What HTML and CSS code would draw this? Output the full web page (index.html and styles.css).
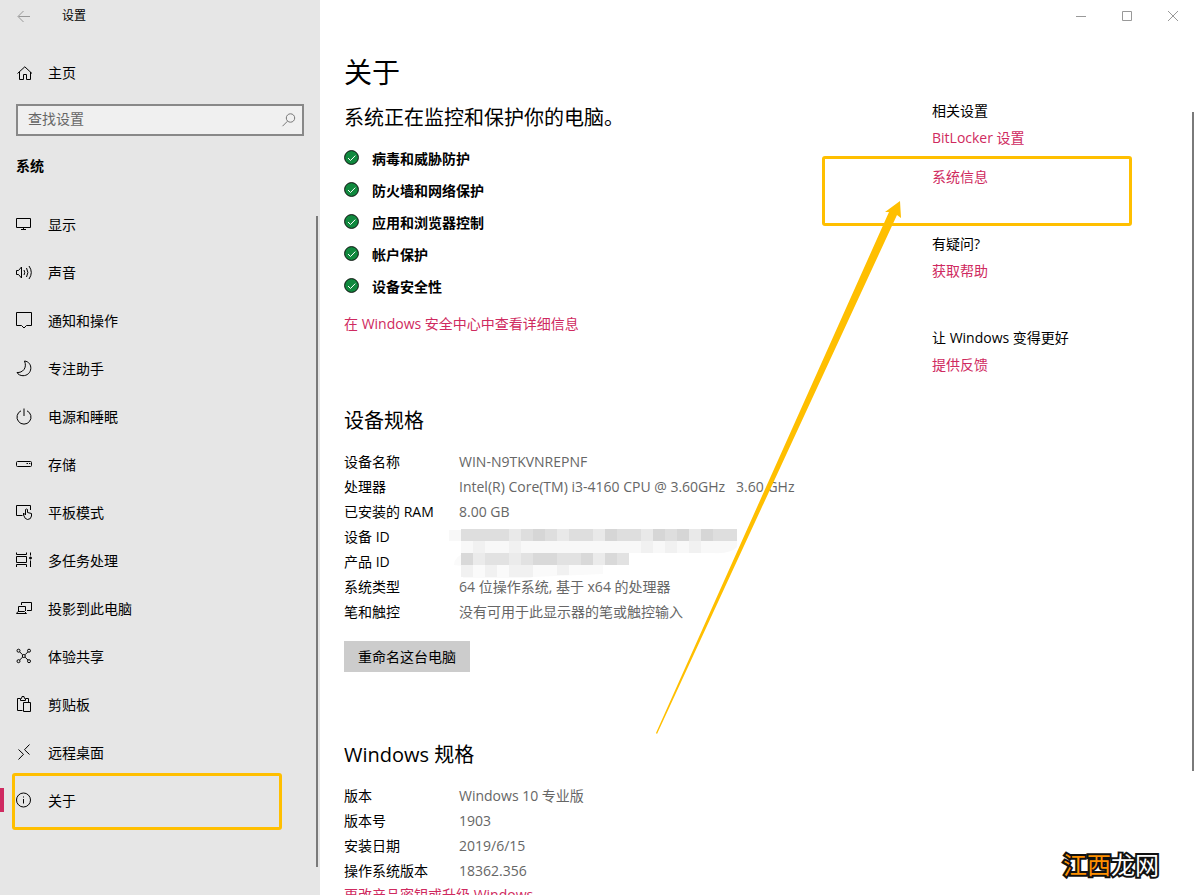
FILE: index.html
```html
<!DOCTYPE html>
<html lang="zh-CN">
<head>
<meta charset="utf-8">
<title>设置</title>
<link rel="stylesheet" href="styles.css">
</head>
<body>
<div class="window">
  <aside class="sidebar">
    <header class="app-bar">
      <button class="back" type="button" aria-label="返回">
        <svg class="icon" viewBox="0 0 17 17"><path d="M2.5 8.5H14M7.5 3L2 8.5L7.5 14"/></svg>
      </button>
      <span class="app-title">设置</span>
    </header>
    <a class="nav-link home" href="#home">
      <svg class="icon" viewBox="0 0 17 17"><path d="M1.5 9.5L8.8 2.8L16 9.5M3.5 8V15.5H7.5V10.5H10.5V15.5H14.5V8"/></svg>
      <span>主页</span>
    </a>
    <label class="search">
      <input class="search-input" type="text" placeholder="查找设置" aria-label="查找设置">
      <svg class="icon search-icon" viewBox="0 0 17 17"><circle cx="10.5" cy="6" r="4.2"/><path d="M7.5 9.2L2.5 14.2"/></svg>
    </label>
    <h2 class="group-title">系统</h2>
    <nav class="nav">
      <a class="nav-link" href="#display"><svg class="icon" viewBox="0 0 17 17"><path d="M.5 2.5H14.5V11.5H.5ZM7.5 11.5V14M5 13.5H10"/></svg><span>显示</span></a>
      <a class="nav-link" href="#sound"><svg class="icon" viewBox="0 0 17 17"><path d="M.5 6.5H2.5L5.5 3V14L2.5 10.5H.5ZM8 6Q9.5 8.5 8 11M10.5 4Q13.300 8.500 10.500 13M13 2Q17.600 8.500 13 15"/></svg><span>声音</span></a>
      <a class="nav-link" href="#notifications"><svg class="icon" viewBox="0 0 17 17"><path d="M.5 .5H15.500V13.500H10.500L8 16L5.500 13.500H.5Z"/></svg><span>通知和操作</span></a>
      <a class="nav-link" href="#focus"><svg class="icon" viewBox="0 0 17 17"><path d="M8.500 1C13 1.500 15 5 14.800 8.500C14.500 13 11 15.700 7 15.700C4.500 15.700 2 14.500 1 12.500C6.500 13 11.500 8 8.500 1Z"/></svg><span>专注助手</span></a>
      <a class="nav-link" href="#power"><svg class="icon" viewBox="0 0 17 17"><path d="M5 2.800A7 7 0 1 0 11 2.800M8 .5V8"/></svg><span>电源和睡眠</span></a>
      <a class="nav-link" href="#storage"><svg class="icon" viewBox="0 0 17 17"><rect x=".5" y="5.500" width="15" height="5" rx="1"/><path d="M10.500 7.500H12M13 7.500H14.300"/></svg><span>存储</span></a>
      <a class="nav-link" href="#tablet"><svg class="icon" viewBox="0 0 17 17"><path d="M6.500 11.500H.5V1.500H14.500V6M7.500 11V9L9.500 11V5.500Q10.500 4.500 11.500 5.500V8.500L15.500 9.500V12Q15 15.500 11.500 15.500Q9 15.500 7.500 11"/></svg><span>平板模式</span></a>
      <a class="nav-link" href="#multitask"><svg class="icon" viewBox="0 0 17 17"><path d="M.5 .5V2.500H10.500V.5M.5 4.500H10.500V10.500H.5ZM.5 15V12.500H10.500V15M14.500 .5V3.500M14.500 8.500V15"/><circle class="solid" cx="14.500" cy="6" r="1"/></svg><span>多任务处理</span></a>
      <a class="nav-link" href="#project"><svg class="icon" viewBox="0 0 17 17"><path d="M5.500 5V2.500H15.500V10.500H11M2.500 11V6.500H9.500V11M.5 13.500L2 11.500H8.500L10.500 13.500Z"/></svg><span>投影到此电脑</span></a>
      <a class="nav-link" href="#share"><svg class="icon" viewBox="0 0 17 17"><circle cx="2.500" cy="2.700" r="1.500"/><circle cx="13" cy="2.700" r="1.500"/><circle cx="2.500" cy="13.200" r="1.500"/><circle cx="13" cy="13.200" r="1.500"/><circle cx="7.800" cy="8" r="1.500"/><path d="M3.700 3.900L6.600 6.800M11.900 3.900L9 6.800M3.700 12L6.600 9.100M11.900 12L9 9.100"/></svg><span>体验共享</span></a>
      <a class="nav-link" href="#clipboard"><svg class="icon" viewBox="0 0 17 17"><path d="M6.500 14.500H1.500V2.500H4M10 2.500H12.500V6M4.500 4.500V2.500H5.500L6 .5H8L8.500 2.500H9.500V4.500ZM7.500 6.500H14.500V15.500H7.500Z"/></svg><span>剪贴板</span></a>
      <a class="nav-link" href="#remote"><svg class="icon" viewBox="0 0 17 17"><path d="M2.500 5.500L7.500 10.300L2.500 15.500M13.500 .5L8.500 5.700L13.500 10.500"/></svg><span>远程桌面</span></a>
      <a class="nav-link current" href="#about" aria-current="page"><svg class="icon" viewBox="0 0 17 17"><circle cx="7.500" cy="8" r="7"/><path d="M7.500 7V11.500M7.500 4.500V5.500"/></svg><span>关于</span></a>
    </nav>
    <span class="scroll-thumb side-thumb"></span>
  </aside>

  <main class="content">
    <div class="caption">
      <button class="caption-btn" type="button" aria-label="最小化"><svg class="caption-icon" viewBox="0 0 10 10"><path d="M0 5.500H10"/></svg></button>
      <button class="caption-btn" type="button" aria-label="最大化"><svg class="caption-icon" viewBox="0 0 10 10"><path d="M.5 .5H9.500V9.500H.5Z"/></svg></button>
      <button class="caption-btn" type="button" aria-label="关闭"><svg class="caption-icon" viewBox="0 0 10 10"><path d="M0 0L10 10M10 0L0 10"/></svg></button>
    </div>
    <div class="columns">
      <div class="primary">
        <h1 class="page-title">关于</h1>
        <p class="status">系统正在监控和保护你的电脑。</p>
        <ul class="checks">
          <li class="check"><svg class="tick" viewBox="0 0 16 16"><circle cx="7.500" cy="7.500" r="6.900"/><path d="M4 8L6.500 10.500L11.300 5.600"/></svg>病毒和威胁防护</li>
          <li class="check"><svg class="tick" viewBox="0 0 16 16"><circle cx="7.500" cy="7.500" r="6.900"/><path d="M4 8L6.500 10.500L11.300 5.600"/></svg>防火墙和网络保护</li>
          <li class="check"><svg class="tick" viewBox="0 0 16 16"><circle cx="7.500" cy="7.500" r="6.900"/><path d="M4 8L6.500 10.500L11.300 5.600"/></svg>应用和浏览器控制</li>
          <li class="check"><svg class="tick" viewBox="0 0 16 16"><circle cx="7.500" cy="7.500" r="6.900"/><path d="M4 8L6.500 10.500L11.300 5.600"/></svg>帐户保护</li>
          <li class="check"><svg class="tick" viewBox="0 0 16 16"><circle cx="7.500" cy="7.500" r="6.900"/><path d="M4 8L6.500 10.500L11.300 5.600"/></svg>设备安全性</li>
        </ul>
        <a class="link security" href="#security">在 Windows 安全中心中查看详细信息</a>

        <section class="specs">
          <h2 class="section-title">设备规格</h2>
          <table class="spec-table">
            <tr><th scope="row">设备名称</th><td>WIN-N9TKVNREPNF</td></tr>
            <tr><th scope="row">处理器</th><td>Intel(R) Core(TM) i3-4160 CPU @ 3.60GHz &nbsp; 3.60 GHz</td></tr>
            <tr><th scope="row">已安装的 RAM</th><td>8.00 GB</td></tr>
            <tr><th scope="row">设备 ID</th><td class="masked">
              <svg class="mosaic" viewBox="0 0 294 50">
                <path fill="#f8f8f8" d="M0 1H12V12H0ZM12 12H288V18Q282 25 264 24H12Z"/>
                <path fill="#fafafa" d="M5 36Q6 26 16 25H154V45L84 48Q80 50 74 49H14V37Z"/>
                <path fill="#dedede" d="M12 0H288V12H12Z"/>
                <path fill="#e9e9e9" d="M60 0H72V12H60ZM108 0H120V12H108ZM144 0H156V12H144ZM192 0H204V12H192ZM240 0H252V12H240Z"/>
                <path fill="#d6d6d6" d="M84 0H96V12H84ZM156 0H168V12H156ZM204 0H216V12H204ZM228 0H240V12H228ZM252 0H264V12H252Z"/>
                <path fill="#f1f1f1" d="M24 12H36V24H24ZM60 12H72V24H60ZM192 12H204V24H192ZM216 12H228V24H216ZM240 12H252V24H240Z"/>
                <path fill="#e2e2e2" d="M12 24H180V36H12Z"/>
                <path fill="#d9d9d9" d="M12 24H24V36H12ZM84 24H108V36H84ZM132 24H144V36H132ZM156 24H168V36H156Z"/>
                <path fill="#ebebeb" d="M24 24H36V36H24ZM60 24H72V36H60ZM144 24H156V36H144Z"/>
                <path fill="#f1f1f1" d="M12 36H24V48H12ZM36 36H48V48H36ZM60 36H84V48H60ZM108 36H120V46H108Z"/>
              </svg>
            </td></tr>
            <tr><th scope="row">产品 ID</th><td></td></tr>
            <tr><th scope="row">系统类型</th><td>64 位操作系统, 基于 x64 的处理器</td></tr>
            <tr><th scope="row">笔和触控</th><td>没有可用于此显示器的笔或触控输入</td></tr>
          </table>
          <button class="rename" type="button">重命名这台电脑</button>
        </section>

        <section class="specs">
          <h2 class="section-title">Windows 规格</h2>
          <table class="spec-table">
            <tr><th scope="row">版本</th><td>Windows 10 专业版</td></tr>
            <tr><th scope="row">版本号</th><td>1903</td></tr>
            <tr><th scope="row">安装日期</th><td>2019/6/15</td></tr>
            <tr><th scope="row">操作系统版本</th><td>18362.356</td></tr>
          </table>
          <a class="link" href="#key">更改产品密钥或升级 Windows</a>
        </section>
      </div>

      <aside class="related">
        <section class="related-group">
          <h3 class="related-title">相关设置</h3>
          <a class="link" href="#bitlocker">BitLocker 设置</a>
          <a class="link marked" href="#sysinfo">系统信息</a>
        </section>
        <section class="related-group">
          <h3 class="related-title">有疑问?</h3>
          <a class="link" href="#help">获取帮助</a>
        </section>
        <section class="related-group">
          <h3 class="related-title">让 Windows 变得更好</h3>
          <a class="link" href="#feedback">提供反馈</a>
        </section>
        <svg class="arrow" viewBox="0 0 250 540"><path d="M246 3L247 20L243 17L3 536L2 535L235 14L231 14Z"/></svg>
      </aside>
    </div>
    <span class="scroll-thumb main-thumb"></span>
    <div class="watermark"><span class="watermark-accent">江西</span>龙网</div>
  </main>
</div>
</body>
</html>
```
FILE: styles.css
```css
*, *::before, *::after { box-sizing: border-box; }

body {
  margin: 0;
  background: #fff;
  color: #000;
  font: 14px/24px "Open Sans", "Noto Sans CJK SC", sans-serif;
}

h1, h2, h3, p, ul { margin: 0; padding: 0; font-weight: 400; }
ul { list-style: none; }
a { color: inherit; text-decoration: none; }
button { border: 0; padding: 0; background: none; font: inherit; color: inherit; }

.window { display: flex; height: 100vh; overflow: hidden; }

.icon {
  width: 17px;
  height: 17px;
  flex: none;
  fill: none;
  stroke: currentColor;
  stroke-width: 1;
}
.icon .solid { fill: currentColor; }

/* Sidebar */
.sidebar { position: relative; width: 320px; flex: none; background: #e6e6e6; }
.app-bar { display: flex; align-items: center; height: 32px; padding-left: 16px; gap: 29px; }
.back { display: flex; color: #999; }
.app-title { font-size: 12px; }
.nav-link { position: relative; display: flex; align-items: center; gap: 15px; height: 48px; padding-left: 16px; }
.nav-link .icon { margin-bottom: 2px; }
.home { margin-top: 17px; }

.search { position: relative; display: block; margin: 7px 16px 0; }
.search-input {
  display: block;
  width: 100%;
  height: 32px;
  padding: 0 32px 4px 10px;
  border: 2px solid #888;
  border-radius: 0;
  background: #f0f0f0;
  font: inherit;
}
.search-input::placeholder { color: #666; opacity: 1; }
.search-icon { position: absolute; right: 7px; top: 8px; color: #777; }

.group-title { margin: 18px 16px 23px; font-weight: 700; font-size: 14px; }

.current::before { content: ""; position: absolute; left: 0; top: 11px; width: 4px; height: 24px; background: #cf2a60; }
.current::after { content: ""; position: absolute; inset: -4px 38px -5px 12px; border: 3px solid #ffbf00; border-radius: 3px; }

.scroll-thumb { position: absolute; width: 2px; background: #7a7a7a; }
.side-thumb { right: 2px; top: 216px; bottom: 28px; }
.main-thumb { right: 2px; top: 112px; bottom: 124px; }

/* Content */
.content { position: relative; flex: 1; min-width: 0; }
.caption { display: flex; justify-content: flex-end; height: 32px; }
.caption-btn { display: flex; align-items: center; justify-content: center; width: 46px; }
.caption-icon { width: 10px; height: 10px; fill: none; stroke: #999; }
.columns { display: grid; grid-template-columns: 1fr 264px; padding: 20px 0 0 24px; }

.page-title { font-size: 28px; line-height: 40px; }
.status { margin-top: 13px; font-size: 20px; line-height: 26px; }
.checks { margin: 12px 0 9px; }
.check { display: flex; align-items: center; gap: 12px; height: 32px; font-weight: 700; }
.tick { width: 16px; height: 16px; margin-bottom: 2px; fill: #10893e; stroke: #111; }
.tick path { fill: none; stroke: #fff; }
.link { display: block; color: #cf2a60; }
.security { padding-bottom: 2px; }

.specs { margin-top: 69px; }
.section-title { font-size: 20px; line-height: 28px; }
.spec-table { margin: 14px 0 0; border-collapse: collapse; }
.spec-table th, .spec-table td { height: 25px; padding: 0; text-align: left; font-weight: 400; white-space: nowrap; }
.spec-table th { width: 115px; }
.spec-table td { color: #666; }
.masked { position: relative; }
.mosaic { position: absolute; left: -10px; top: 5px; width: 294px; height: 50px; }
.rename { display: block; margin-top: 17px; height: 31px; padding: 0 14px; background: #ccc; }

.related { position: relative; padding-top: 47px; }
.related-group { margin-bottom: 43px; }
.related-title { margin-bottom: 3px; font-size: 14px; }
.marked { position: relative; margin-top: 15px; }
.marked::before {
  content: "";
  position: absolute;
  left: -110px;
  top: -9px;
  width: 310px;
  height: 70px;
  border: 3px solid #ffbf00;
  border-radius: 3px;
  pointer-events: none;
}
.arrow { position: absolute; left: -278px; top: 146px; width: 250px; height: 540px; fill: #ffbf00; pointer-events: none; }

.watermark {
  position: absolute;
  right: 37px;
  bottom: 15px;
  color: #fff;
  font: 400 24px/32px "Noto Sans CJK SC", sans-serif;
  -webkit-text-stroke: 4px #111;
  paint-order: stroke fill;
}
.watermark-accent { color: #ff9000; }
```
